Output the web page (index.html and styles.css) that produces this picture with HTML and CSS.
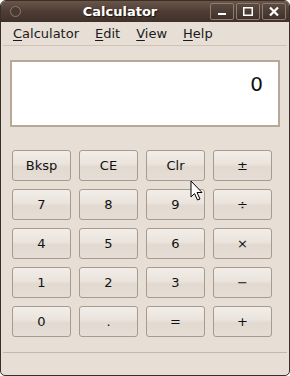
FILE: index.html
```html
<!DOCTYPE html>
<html lang="en">
<head>
    <meta charset="UTF-8">
    <title>Calculator</title>
    <link rel="stylesheet" href="styles.css">
</head>
<body>
    <div class="window">
        <div class="titlebar">
            <span class="title-dot"></span>
            <span class="title">Calculator</span>
            <div class="win-buttons">
                <span class="win-btn"><svg width="22" height="15" viewBox="0 0 22 15"><rect x="7" y="9" width="8" height="2" fill="#fff"/></svg></span>
                <span class="win-btn"><svg width="22" height="15" viewBox="0 0 22 15"><rect x="6.75" y="3.75" width="8.5" height="7.5" fill="none" stroke="#fff" stroke-width="1.5"/></svg></span>
                <span class="win-btn"><svg width="22" height="15" viewBox="0 0 22 15"><path d="M7 3.5 L15 11.5 M15 3.5 L7 11.5" stroke="#fff" stroke-width="2.2"/></svg></span>
            </div>
        </div>
        <div class="menubar">
            <span class="menu-item"><u>C</u>alculator</span>
            <span class="menu-item"><u>E</u>dit</span>
            <span class="menu-item"><u>V</u>iew</span>
            <span class="menu-item"><u>H</u>elp</span>
        </div>
        <div class="content">
            <div class="display">0</div>
            <div class="keys">
                <button class="key">Bksp</button>
                <button class="key">CE</button>
                <button class="key">Clr</button>
                <button class="key">±</button>
                <button class="key">7</button>
                <button class="key">8</button>
                <button class="key">9</button>
                <button class="key">÷</button>
                <button class="key">4</button>
                <button class="key">5</button>
                <button class="key">6</button>
                <button class="key">×</button>
                <button class="key">1</button>
                <button class="key">2</button>
                <button class="key">3</button>
                <button class="key">−</button>
                <button class="key">0</button>
                <button class="key">.</button>
                <button class="key">=</button>
                <button class="key">+</button>
            </div>
        </div>
        <div class="statusbar"></div>
    </div>
    <!-- mouse pointer over the Clr key -->
    <svg class="pointer" width="14" height="22" viewBox="0 0 14 22">
        <path d="M1 1 L1 17 L4.5 13.5 L7.5 20 L10 19 L7 12.5 L12 12.5 Z" fill="#fff" stroke="#000" stroke-width="1" stroke-linejoin="round"/>
    </svg>
</body>
</html>
```

FILE: styles.css
```css
body {
    margin: 0;
    background: #ffffff;
    font-family: "DejaVu Sans", sans-serif;
    position: relative;
}
.window {
    width: 288px;
    height: 374px;
    border: 1px solid #3a2e28;
    border-radius: 6px 6px 5px 5px;
    background: #e7dfd6;
    overflow: hidden;
    display: flex;
    flex-direction: column;
}
.titlebar {
    height: 21px;
    background: linear-gradient(#6a564a, #4e3d34 50%, #3f312a);
    display: flex;
    align-items: center;
    position: relative;
}
.title-dot {
    width: 9px;
    height: 9px;
    border: 1px solid #8c7b70;
    border-radius: 50%;
    margin-left: 9px;
    background: #4a3a31;
}
.title {
    position: absolute;
    left: 0;
    right: 50px;
    text-align: center;
    color: #ffffff;
    font-weight: bold;
    font-size: 13px;
    text-shadow: 1px 1px 1px #1e1511;
}
.win-buttons {
    margin-left: auto;
    margin-right: 3px;
    display: flex;
    gap: 2px;
    position: relative;
}
.win-btn {
    width: 22px;
    height: 15px;
    border: 1px solid #8e7c70;
    border-radius: 2px;
    background: linear-gradient(#5b4a40, #3f312a);
    display: flex;
}
.menubar {
    height: 23px;
    margin: 0 2px;
    display: flex;
    align-items: center;
    padding-left: 10px;
    gap: 16px;
    font-size: 13px;
    color: #1a1a1a;
    border-bottom: 1px solid #cfc3b7;
}
.menu-item u {
    text-decoration-thickness: 1px;
    text-underline-offset: 2px;
}
.content {
    padding: 14px 9px 0 9px;
    flex: 1;
}
.display {
    height: 67px;
    border: 2px solid #b8a898;
    background: #ffffff;
    text-align: right;
    font-size: 20px;
    padding: 10px 15px 0 0;
    box-sizing: border-box;
    color: #111;
}
.keys {
    margin-top: 23px;
    padding: 0 8px 0 2px;
    display: grid;
    grid-template-columns: repeat(4, 1fr);
    column-gap: 8px;
    row-gap: 8px;
}
.key {
    height: 31px;
    border: 1px solid #a89a8c;
    border-radius: 3px;
    background: linear-gradient(#f2ede8, #ebe4dd 45%, #e2d9d0 55%, #e6ded6);
    font-family: "DejaVu Sans", sans-serif;
    font-size: 13px;
    color: #111;
    padding: 0;
}
.statusbar {
    height: 22px;
    margin: 0 2px;
    border-top: 1px solid #c6b8a9;
}
.pointer {
    position: absolute;
    left: 190px;
    top: 180px;
}
```
